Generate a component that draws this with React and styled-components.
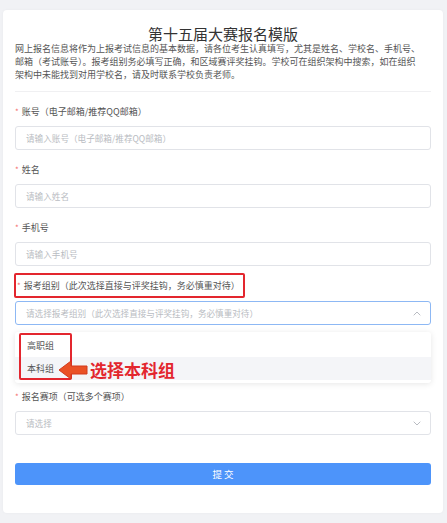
import React from "react";
import styled, { createGlobalStyle } from "styled-components";

const GlobalStyle = createGlobalStyle`
  html, body {
    margin: 0;
    padding: 0;
    background: #f1f2f5;
    font-family: "Noto Sans CJK SC", "Noto Sans", sans-serif;
  }
`;

const Page = styled.div`
  padding: 10px 4px 10px 3px;
`;

const Card = styled.div`
  background: #fff;
  border-radius: 4px;
  box-shadow: 0 0 3px rgba(0, 0, 0, 0.04);
  padding: 16px 12px 28px 12px;
`;

const Title = styled.h1`
  margin: 0;
  text-align: center;
  font-size: 15px;
  line-height: 16px;
  font-weight: 400;
  color: #333;
`;

const Intro = styled.p`
  margin: 0;
  padding: 0 0 10px;
  font-size: 9px;
  line-height: 13px;
  color: #555;
  border-bottom: 1px solid #f0f0f2;
`;

const Item = styled.div`
  display: flex;
  flex-direction: column;
  align-items: flex-start;
  margin-top: ${(p) => p.$top || 14}px;
`;

const Label = styled.label`
  display: flex;
  align-items: center;
  box-sizing: border-box;
  font-size: 9px;
  line-height: 12px;
  color: #555;
  height: ${(p) => (p.$marked ? "25px" : "12px")};
  width: ${(p) => (p.$marked ? "231px" : "auto")};
  margin: ${(p) => (p.$marked ? "0 0 3px -1px" : "0 0 8px")};
  padding-left: ${(p) => (p.$marked ? "1px" : "0")};
  border: ${(p) => (p.$marked ? "2px solid #e3262e" : "none")};
  border-radius: 2px;

  &::before {
    content: "*";
    color: #f56c6c;
    margin-right: 3px;
    font-size: 8px;
  }
`;

const Field = styled.div`
  box-sizing: border-box;
  width: 100%;
  height: 24px;
  display: flex;
  align-items: center;
  justify-content: space-between;
  padding: 0 9px 0 10px;
  border: 1px solid ${(p) => (p.$active ? "#8db8f4" : "#e1e3e8")};
  border-radius: 3px;
  font-size: 8.6px;
  color: #b9bcc2;
`;

const Dropdown = styled.div`
  position: relative;
  box-sizing: border-box;
  width: 100%;
  margin-top: 7px;
  padding: 2px 0 3px;
  background: #fff;
  border-radius: 3px;
  box-shadow: 0 1px 6px rgba(0, 0, 0, 0.1);
`;

const Option = styled.div`
  height: 23px;
  display: flex;
  align-items: center;
  padding-left: 12px;
  font-size: 9px;
  color: #555;
  background: ${(p) => (p.$hover ? "#f4f5f8" : "transparent")};
`;

const MarkBox = styled.div`
  position: absolute;
  left: 4px;
  top: 1px;
  width: 53px;
  height: 47px;
  box-sizing: border-box;
  border: 2px solid #e3262e;
  border-radius: 2px;
`;

const Hint = styled.div`
  position: absolute;
  left: 43px;
  top: 28px;
  display: flex;
  align-items: center;
  gap: 2px;
  color: #e3262e;
  font-size: 17px;
  font-weight: 700;
  line-height: 20px;
`;

const Submit = styled.button`
  width: 100%;
  height: 22px;
  margin-top: 28px;
  border: none;
  border-radius: 3px;
  background: #4d94fa;
  color: #fff;
  font-family: inherit;
  font-size: 9.5px;
  letter-spacing: 2px;
  padding: 0 0 0 2px;
`;

const Chevron = ({ up }) => (
  <svg width="8" height="5" viewBox="0 0 8 5">
    <path
      d={up ? "M0.7 4.3 4 1 7.3 4.3" : "M0.7 0.7 4 4 7.3 0.7"}
      fill="none"
      stroke="#b9bcc2"
      strokeWidth="1"
    />
  </svg>
);

const Arrow = () => (
  <svg width="30" height="20" viewBox="0 0 30 20">
    <path
      d="M1 10 L13 1 L13 6 L29 6 L29 14 L13 14 L13 19 Z"
      fill="#ea5126"
      stroke="#d23a1c"
      strokeWidth="1"
      strokeLinejoin="round"
    />
  </svg>
);

export default function App() {
  return (
    <Page>
      <GlobalStyle />
      <Card>
        <Title>第十五届大赛报名模版</Title>
        <Intro>
          网上报名信息将作为上报考试信息的基本数据，请各位考生认真填写，尤其是姓名、学校名、手机号、
          <br />
          邮箱（考试账号）。报考组别务必填写正确，和区域赛评奖挂钩。学校可在组织架构中搜索，如在组织
          <br />
          架构中未能找到对用学校名，请及时联系学校负责老师。
        </Intro>

        <Item $top={14}>
          <Label>账号（电子邮箱/推荐QQ邮箱）</Label>
          <Field>请输入账号（电子邮箱/推荐QQ邮箱）</Field>
        </Item>
        <Item>
          <Label>姓名</Label>
          <Field>请输入姓名</Field>
        </Item>
        <Item>
          <Label>手机号</Label>
          <Field>请输入手机号</Field>
        </Item>
        <Item $top={7}>
          <Label $marked>报考组别（此次选择直接与评奖挂钩，务必慎重对待）</Label>
          <Field $active>
            请选择报考组别（此次选择直接与评奖挂钩，务必慎重对待）
            <Chevron up />
          </Field>
          <Dropdown>
            <Option>高职组</Option>
            <Option $hover>本科组</Option>
            <MarkBox />
            <Hint>
              <Arrow />
              选择本科组
            </Hint>
          </Dropdown>
        </Item>
        <Item $top={8}>
          <Label>报名赛项（可选多个赛项）</Label>
          <Field>
            请选择
            <Chevron />
          </Field>
        </Item>
        <Submit>提交</Submit>
      </Card>
    </Page>
  );
}
